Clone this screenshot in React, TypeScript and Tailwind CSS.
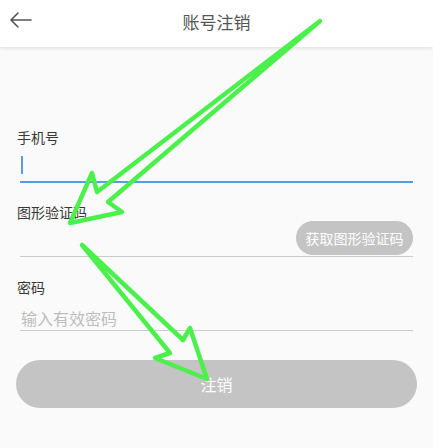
import React from "react";

export default function App() {
  const font = { fontFamily: '"Noto Sans CJK SC", "Noto Sans", sans-serif' };
  return (
    <div className="relative w-[433px] h-[448px] overflow-hidden bg-[#fafafa]" style={font}>
      <div className="relative z-10 h-[47px] bg-white flex items-center justify-center shadow-[0_1px_4px_rgba(0,0,0,0.12)]">
        <div className="absolute left-[9px] top-[11px]">
          <svg width="24" height="18" viewBox="0 0 24 18" fill="none" stroke="#555" strokeWidth="1.6" strokeLinecap="round" strokeLinejoin="round">
            <path d="M22 9H2M9 2L2 9l7 7" />
          </svg>
        </div>
        <span className="text-[17px] text-[#555] leading-none mt-[-4px]">账号注销</span>
      </div>

      <div className="px-[16px] pt-[80px] flex flex-col">
        <div className="ml-[1px] text-[14px] leading-[20px] text-[#383838]">手机号</div>
        <div className="mx-[4px] h-[36px] border-b-2 border-[#5b9be6] flex items-center">
          <div className="w-[2px] h-[18px] bg-[#5b9be6] ml-[1px] mt-[1px]" />
        </div>

        <div className="ml-[1px] mt-[19px] text-[14px] leading-[20px] text-[#383838]">图形验证码</div>
        <div className="mx-[4px] h-[35px] border-b border-[#cccccc] flex items-start justify-end">
          <div className="h-[34px] w-[117px] rounded-full bg-[#c4c4c4] text-white text-[14px] flex items-center justify-center mt-[-1px]">
            获取图形验证码
          </div>
        </div>

        <div className="ml-[1px] mt-[20px] text-[14px] leading-[20px] text-[#383838]">密码</div>
        <div className="mx-[4px] h-[34px] border-b border-[#cccccc] flex items-end pb-[2px]">
          <span className="ml-[1px] text-[16px] leading-[20px] text-[#bdbdbd]">输入有效密码</span>
        </div>

        <button className="mt-[29px] h-[48px] w-full rounded-full bg-[#c4c4c4] text-white text-[16px] flex items-center justify-center">
          注销
        </button>
      </div>

      <svg className="absolute inset-0 z-20 pointer-events-none" width="433" height="448" viewBox="0 0 433 448" fill="none">
        <path
          d="M320 21 L97 192 L92 173 L70 223 L122 212 L108 202 Z"
          stroke="#4cf04c"
          strokeWidth="4.5"
          strokeLinejoin="round"
          strokeLinecap="round"
        />
        <path
          d="M82 245 L170 353 L155 358 L207 379 L190 328 L183 340 Z"
          stroke="#4cf04c"
          strokeWidth="4.5"
          strokeLinejoin="round"
          strokeLinecap="round"
        />
      </svg>
    </div>
  );
}
